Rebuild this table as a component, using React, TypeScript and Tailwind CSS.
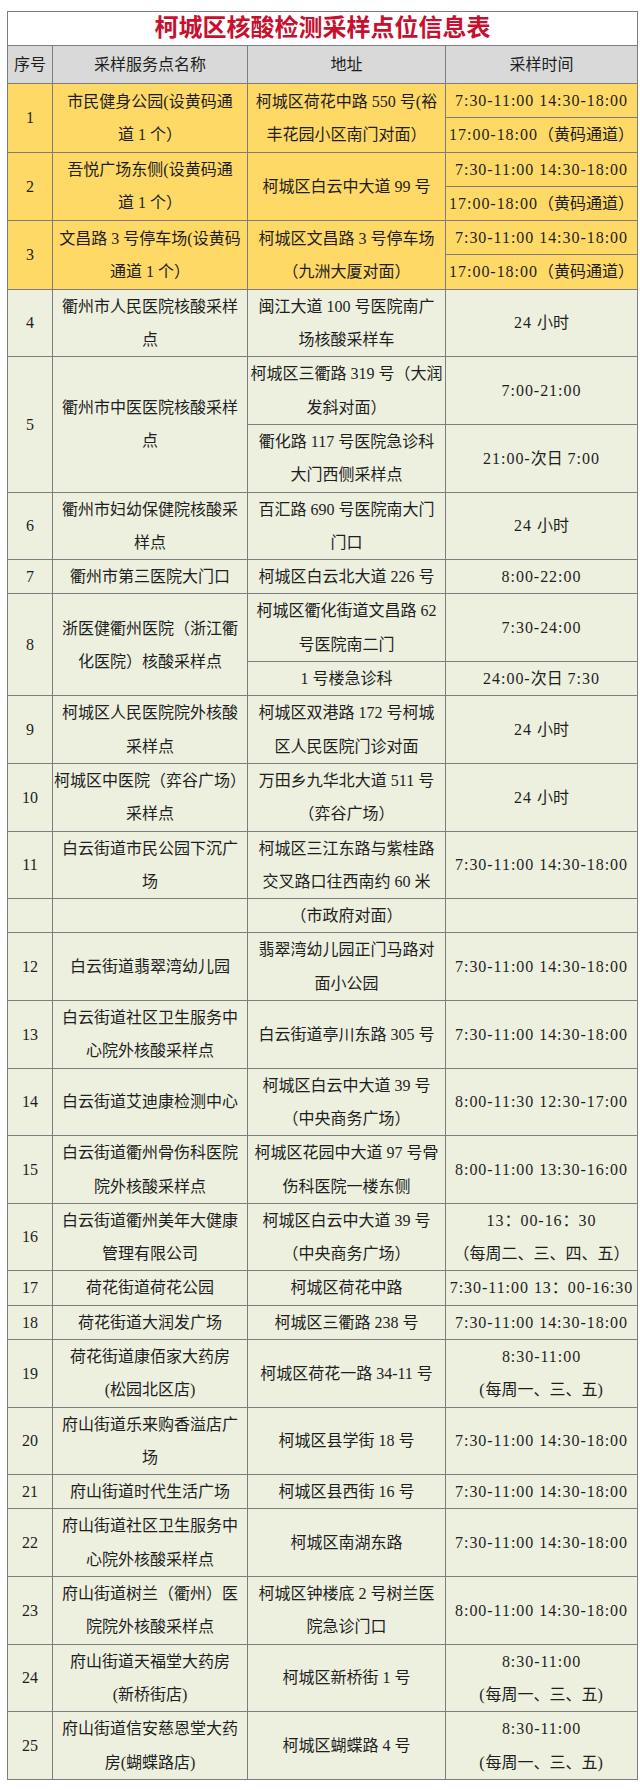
import React from "react";

type Part = { addr?: string[]; time: string[] };
type Row = { no: string; name: string[]; addr?: string[]; parts: Part[]; yellow?: boolean };

const T1 = "7:30-11:00 14:30-18:00";

const rows: Row[] = [
  {
    no: "1",
    yellow: true,
    name: ["市民健身公园(设黄码通", "道 1 个）"],
    addr: ["柯城区荷花中路 550 号(裕", "丰花园小区南门对面）"],
    parts: [{ time: [T1] }, { time: ["17:00-18:00（黄码通道）"] }],
  },
  {
    no: "2",
    yellow: true,
    name: ["吾悦广场东侧(设黄码通", "道 1 个）"],
    addr: ["柯城区白云中大道 99 号"],
    parts: [{ time: [T1] }, { time: ["17:00-18:00（黄码通道）"] }],
  },
  {
    no: "3",
    yellow: true,
    name: ["文昌路 3 号停车场(设黄码", "通道 1 个）"],
    addr: ["柯城区文昌路 3 号停车场", "（九洲大厦对面）"],
    parts: [{ time: [T1] }, { time: ["17:00-18:00（黄码通道）"] }],
  },
  {
    no: "4",
    name: ["衢州市人民医院核酸采样", "点"],
    parts: [{ addr: ["闽江大道 100 号医院南广", "场核酸采样车"], time: ["24 小时"] }],
  },
  {
    no: "5",
    name: ["衢州市中医医院核酸采样", "点"],
    parts: [
      { addr: ["柯城区三衢路 319 号（大润", "发斜对面）"], time: ["7:00-21:00"] },
      { addr: ["衢化路 117 号医院急诊科", "大门西侧采样点"], time: ["21:00-次日 7:00"] },
    ],
  },
  {
    no: "6",
    name: ["衢州市妇幼保健院核酸采", "样点"],
    parts: [{ addr: ["百汇路 690 号医院南大门", "门口"], time: ["24 小时"] }],
  },
  {
    no: "7",
    name: ["衢州市第三医院大门口"],
    parts: [{ addr: ["柯城区白云北大道 226 号"], time: ["8:00-22:00"] }],
  },
  {
    no: "8",
    name: ["浙医健衢州医院（浙江衢", "化医院）核酸采样点"],
    parts: [
      { addr: ["柯城区衢化街道文昌路 62", "号医院南二门"], time: ["7:30-24:00"] },
      { addr: ["1 号楼急诊科"], time: ["24:00-次日 7:30"] },
    ],
  },
  {
    no: "9",
    name: ["柯城区人民医院院外核酸", "采样点"],
    parts: [{ addr: ["柯城区双港路 172 号柯城", "区人民医院门诊对面"], time: ["24 小时"] }],
  },
  {
    no: "10",
    name: ["柯城区中医院（弈谷广场）", "采样点"],
    parts: [{ addr: ["万田乡九华北大道 511 号", "（弈谷广场）"], time: ["24 小时"] }],
  },
  {
    no: "11",
    name: ["白云街道市民公园下沉广", "场"],
    parts: [{ addr: ["柯城区三江东路与紫桂路", "交叉路口往西南约 60 米"], time: [T1] }],
  },
  {
    no: "",
    name: [],
    parts: [{ addr: ["（市政府对面）"], time: [] }],
  },
  {
    no: "12",
    name: ["白云街道翡翠湾幼儿园"],
    parts: [{ addr: ["翡翠湾幼儿园正门马路对", "面小公园"], time: [T1] }],
  },
  {
    no: "13",
    name: ["白云街道社区卫生服务中", "心院外核酸采样点"],
    parts: [{ addr: ["白云街道亭川东路 305 号"], time: [T1] }],
  },
  {
    no: "14",
    name: ["白云街道艾迪康检测中心"],
    parts: [{ addr: ["柯城区白云中大道 39 号", "（中央商务广场）"], time: ["8:00-11:30 12:30-17:00"] }],
  },
  {
    no: "15",
    name: ["白云街道衢州骨伤科医院", "院外核酸采样点"],
    parts: [{ addr: ["柯城区花园中大道 97 号骨", "伤科医院一楼东侧"], time: ["8:00-11:00 13:30-16:00"] }],
  },
  {
    no: "16",
    name: ["白云街道衢州美年大健康", "管理有限公司"],
    parts: [
      {
        addr: ["柯城区白云中大道 39 号", "（中央商务广场）"],
        time: ["13：00-16：30", "（每周二、三、四、五）"],
      },
    ],
  },
  {
    no: "17",
    name: ["荷花街道荷花公园"],
    parts: [{ addr: ["柯城区荷花中路"], time: ["7:30-11:00 13：00-16:30"] }],
  },
  {
    no: "18",
    name: ["荷花街道大润发广场"],
    parts: [{ addr: ["柯城区三衢路 238 号"], time: [T1] }],
  },
  {
    no: "19",
    name: ["荷花街道康佰家大药房", "(松园北区店)"],
    parts: [{ addr: ["柯城区荷花一路 34-11 号"], time: ["8:30-11:00", "(每周一、三、五)"] }],
  },
  {
    no: "20",
    name: ["府山街道乐来购香溢店广", "场"],
    parts: [{ addr: ["柯城区县学街 18 号"], time: [T1] }],
  },
  {
    no: "21",
    name: ["府山街道时代生活广场"],
    parts: [{ addr: ["柯城区县西街 16 号"], time: [T1] }],
  },
  {
    no: "22",
    name: ["府山街道社区卫生服务中", "心院外核酸采样点"],
    parts: [{ addr: ["柯城区南湖东路"], time: [T1] }],
  },
  {
    no: "23",
    name: ["府山街道树兰（衢州）医", "院院外核酸采样点"],
    parts: [{ addr: ["柯城区钟楼底 2 号树兰医", "院急诊门口"], time: ["8:00-11:00 14:30-18:00"] }],
  },
  {
    no: "24",
    name: ["府山街道天福堂大药房", "(新桥街店)"],
    parts: [{ addr: ["柯城区新桥街 1 号"], time: ["8:30-11:00", "(每周一、三、五)"] }],
  },
  {
    no: "25",
    name: ["府山街道信安慈恩堂大药", "房(蝴蝶路店)"],
    parts: [{ addr: ["柯城区蝴蝶路 4 号"], time: ["8:30-11:00", "(每周一、三、五)"] }],
  },
];

const cell = "border border-[#7d7d7d] px-0 text-center align-middle";

// 时间列里的数字在原图里排得更宽, 只给 ASCII 段加一点字距
const Spaced = ({ text }: { text: string }) => (
  <>
    {text.split(/([\x20-\x7e]+)/).map((s, i) =>
      /^[\x20-\x7e]+$/.test(s) ? (
        <span key={i} className="tracking-[0.06em]">
          {s}
        </span>
      ) : (
        <React.Fragment key={i}>{s}</React.Fragment>
      )
    )}
  </>
);

const Lines = ({ lines, spaced }: { lines?: string[]; spaced?: boolean }) => (
  <>
    {(lines || []).map((l, i) => (
      <div key={i} className="whitespace-nowrap">
        {spaced ? <Spaced text={l} /> : l}
      </div>
    ))}
  </>
);

export default function App() {
  return (
    <div className="min-h-[1790px] bg-white pl-[7px] pt-[11px] font-['Liberation_Serif','Noto_Sans_CJK_SC',serif] text-[16px] text-[#1e1e1e]">
      <table className="w-[630px] table-fixed border-collapse leading-[33.3px]">
        <colgroup>
          <col className="w-[45px]" />
          <col className="w-[195px]" />
          <col className="w-[198px]" />
          <col className="w-[192px]" />
        </colgroup>
        <thead>
          <tr>
            <th
              colSpan={4}
              className={`${cell} bg-white text-[24px] font-bold leading-[33px] text-[#c8102e]`}
            >
              柯城区核酸检测采样点位信息表
            </th>
          </tr>
          <tr className="bg-[#d9d9d9]">
            <th className={`${cell} font-normal leading-[37px]`}>序号</th>
            <th className={`${cell} font-normal leading-[37px]`}>采样服务点名称</th>
            <th className={`${cell} font-normal leading-[37px]`}>地址</th>
            <th className={`${cell} font-normal leading-[37px]`}>采样时间</th>
          </tr>
        </thead>
        <tbody>
          {rows.map((r, ri) => {
            const n = r.parts.length;
            const bg = r.yellow ? "bg-[#ffd966]" : "bg-[#edf0df]";
            return r.parts.map((p, i) => (
              <tr key={`${ri}-${i}`} className={bg}>
                {i === 0 && (
                  <td rowSpan={n} className={cell}>
                    {r.no}
                  </td>
                )}
                {i === 0 && (
                  <td rowSpan={n} className={cell}>
                    <Lines lines={r.name} />
                  </td>
                )}
                {r.addr ? (
                  i === 0 && (
                    <td rowSpan={n} className={cell}>
                      <Lines lines={r.addr} />
                    </td>
                  )
                ) : (
                  <td className={cell}>
                    <Lines lines={p.addr} />
                  </td>
                )}
                <td className={cell}>
                  <Lines lines={p.time} spaced />
                </td>
              </tr>
            ));
          })}
        </tbody>
      </table>
    </div>
  );
}
